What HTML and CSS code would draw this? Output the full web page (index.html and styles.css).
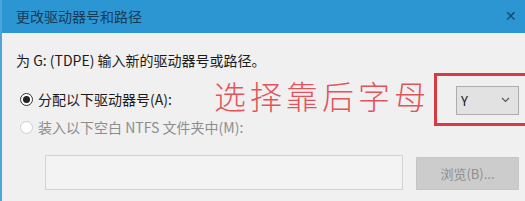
FILE: index.html
```html
<!DOCTYPE html>
<html lang="zh-CN">
<head>
    <meta charset="UTF-8">
    <title>更改驱动器号和路径</title>
    <link rel="stylesheet" href="styles.css">
</head>
<body>
<div class="window">
    <div class="titlebar">
        <span class="title">更改驱动器号和路径</span>
        <span class="close">&#x2715;</span>
    </div>
    <div class="content">
        <p class="hint">为 G: (TDPE) 输入新的驱动器号或路径。</p>
        <div class="row row-assign">
            <span class="radio checked"></span>
            <span class="label">分配以下驱动器号(A):</span>
            <span class="annot">选择靠后字母</span>
            <div class="mark">
                <div class="select">
                    <span>Y</span>
                    <svg class="chev" width="9" height="6" viewBox="0 0 9 6"><path d="M1 1 L4.5 4.5 L8 1" fill="none" stroke="#555" stroke-width="1.1"/></svg>
                </div>
            </div>
        </div>
        <div class="row row-mount">
            <span class="radio"></span>
            <span class="label disabled">装入以下空白 NTFS 文件夹中(M):</span>
        </div>
        <div class="row row-path">
            <div class="path"></div>
            <div class="browse">浏览(B)...</div>
        </div>
    </div>
</div>
</body>
</html>
```

FILE: styles.css
```css
html, body{
    margin: 0;
    padding: 0;
    overflow: hidden;
}
body{
    background-color: #f0f0f0;
    font-family: "Noto Sans CJK SC", "Liberation Sans", sans-serif;
    font-size: 14px;
    color: #1b1b1b;
}
.window{
    border-left: 2px solid #4ea3d8;
    height: 201px;
}
.titlebar{
    height: 33px;
    background-color: #2c96d2;
    display: flex;
    align-items: center;
    justify-content: space-between;
    padding: 0 2px 0 14px;
}
.title{
    color: #173a57;
    font-size: 14px;
    line-height: 1;
    margin-top: -2px;
}
.close{
    color: #1e4766;
    font-size: 14px;
    width: 18px;
    margin-top: -4px;
}
.content{
    padding: 17px 0 0 14px;
}
.hint{
    margin: 0;
    line-height: 20px;
}
.row{
    display: flex;
    align-items: center;
}
.row-assign{
    height: 28px;
    margin-top: 15px;
}
.row-mount{
    height: 20px;
    margin-top: 4px;
}
.row-path{
    margin-top: 18px;
    align-items: flex-end;
}
.radio{
    width: 11px;
    height: 11px;
    border: 1px solid #333;
    border-radius: 50%;
    background-color: #fff;
    margin-left: 4px;
    margin-right: 5px;
    display: flex;
    align-items: center;
    justify-content: center;
}
.radio.checked::after{
    content: "";
    width: 7px;
    height: 7px;
    border-radius: 50%;
    background-color: #222;
}
.row-mount .radio{
    border-color: #cfcfcf;
}
.label{
    line-height: 20px;
    white-space: nowrap;
}
.label.disabled{
    color: #8d8d8d;
}
.annot{
    color: #e2545c;
    font-size: 32px;
    font-weight: 300;
    letter-spacing: 4px;
    line-height: 1;
    margin-left: 42px;
    margin-top: -8px;
    white-space: nowrap;
}
.mark{
    border: 3px solid #d63b43;
    border-right: none;
    padding: 10px 0 8px 19px;
    margin: -13px 0 -13px 4px;
    flex: 1;
}
.select{
    border: 1px solid #adadad;
    background-color: #e2e2e2;
    display: flex;
    align-items: center;
    justify-content: space-between;
    padding: 0 8px 0 4px;
    box-sizing: border-box;
    width: 63px;
    height: 29px;
    font-size: 13px;
}
.path{
    width: 356px;
    height: 33px;
    border: 1px solid #d2d2d2;
    background-color: #f3f3f3;
    margin-left: 29px;
}
.browse{
    width: 101px;
    height: 31px;
    border: 1px solid #c6c6c6;
    background-color: #cccccc;
    color: #8e8e8e;
    font-size: 13px;
    display: flex;
    align-items: center;
    justify-content: center;
    margin-left: 13px;
}
```
